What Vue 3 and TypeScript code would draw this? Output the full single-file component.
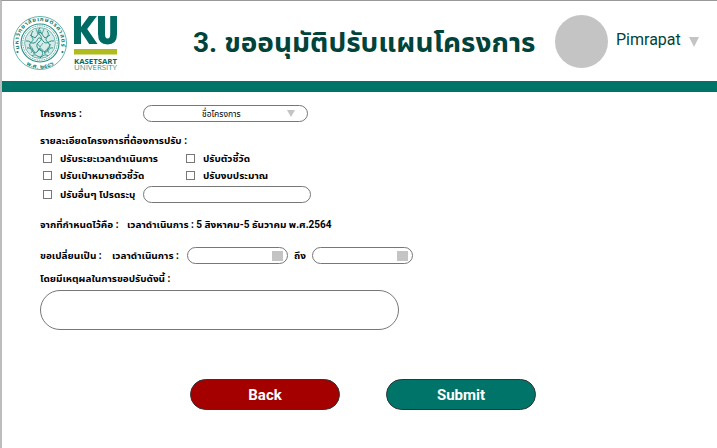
<script setup lang="ts">
import { ref } from 'vue'

interface Choice {
  label: string
  size: string
}

const choices = ref<Choice[]>([
  { label: 'ปรับระยะเวลาดำเนินการ', size: 'duration' },
  { label: 'ปรับตัวชี้วัด', size: 'kpi' },
  { label: 'ปรับเป้าหมายตัวชี้วัด', size: 'target' },
  { label: 'ปรับงบประมาณ', size: 'budget' },
])
</script>

<template>
  <div class="page">
    <header class="header">
      <svg class="seal" viewBox="0 0 56 56">
        <defs>
          <path id="seal-top" d="M7.5 34 A21.5 21.5 0 1 1 48.5 34" />
          <path id="seal-bottom" d="M9 45 A25.2 25.2 0 0 0 47 45" />
        </defs>
        <g fill="none" stroke="#2b8f86">
          <circle cx="28" cy="28" r="26.5" stroke-width=".7" />
          <circle cx="28" cy="28" r="19" stroke-width="1.1" />
          <circle cx="28" cy="28" r="17.2" stroke-width=".9" stroke-dasharray="1 .8" />
          <circle cx="28" cy="28" r="15.4" stroke-width=".6" fill="#d7ebe8" />
          <path stroke-width="1" d="M28 13c-3 3-2 5 0 7s2 5-1 7-3 6 1 8 3 5 0 8M21 16c-3 4-1 6 0 8s-5 4-3 8 5 2 4 7M35 16c3 3 0 6-1 8s6 5 3 9-5 1-4 6M14 26c4-1 4 3 8 2s3-6 6-5 3 5 6 5 4-3 8-2M15 33c5-1 5 5 8 5s3-5 5-5 3 5 6 4 3-5 7-4M18 20l5 3 5-6 5 6 5-3M20 41c4-3 5 1 8 1s4-4 8-1" />
          <path stroke-width=".7" d="M24 14l2 5 2-4 2 4 2-5M17 29l4 5-2 4M39 29l-4 5 2 4M25 28l3 4 3-4M25 37l3-3 3 3" />
        </g>
        <g fill="#167f76">
          <circle cx="5.5" cy="37" r="1.1" />
          <circle cx="50.5" cy="37" r="1.1" />
        </g>
        <text class="seal-text"><textPath href="#seal-top" textLength="78">มหาวิทยาลัยเกษตรศาสตร์</textPath></text>
        <text class="seal-text"><textPath href="#seal-bottom" startOffset="7" textLength="29">พ.ศ. ๒๔๘๖</textPath></text>
      </svg>
      <svg class="ku" viewBox="0 0 44 58">
        <path fill="#006b63" d="M0 2H7V13L15 2H23L13.2 15 23.5 30H15.2L7 17.5V30H0ZM24 2H31V20Q31 24.5 33.6 24.5T36.2 20V2H43V20Q43 30.5 33.5 30.5T24 20Z" />
        <path fill="#b2bb1e" d="M0 35h43v5.5H0z" />
        <text class="ku-bold" x="0" y="49.5" textLength="43" lengthAdjust="spacingAndGlyphs">KASETSART</text>
        <text class="ku-light" x="0" y="56.2" textLength="43" lengthAdjust="spacingAndGlyphs">UNIVERSITY</text>
      </svg>
      <h1 class="title">3. ขออนุมัติปรับแผนโครงการ</h1>
      <div class="avatar"></div>
      <span class="user">Pimrapat</span>
      <svg class="caret" viewBox="0 0 10 10"><path d="M0 0h10L5 10z" /></svg>
    </header>
    <div class="band"></div>
    <main class="form">
      <div class="row project">
        <span class="text project-label">โครงการ :</span>
        <div class="field select">
          <span class="placeholder">ชื่อโครงการ</span>
          <svg class="arrow" viewBox="0 0 8 7"><path d="M0 0h8L4 7z" /></svg>
        </div>
      </div>
      <div class="row heading"><span class="text">รายละเอียดโครงการที่ต้องการปรับ :</span></div>
      <div class="choices">
        <div v-for="choice in choices" :key="choice.label" class="choice">
          <i class="box"></i><span class="text" :class="choice.size">{{ choice.label }}</span>
        </div>
      </div>
      <div class="row other">
        <i class="box"></i>
        <span class="text other-label">ปรับอื่นๆ โปรดระบุ</span>
        <div class="field other-field"></div>
      </div>
      <div class="row original">
        <span class="text original-label">จากที่กำหนดไว้คือ :</span>
        <span class="text">เวลาดำเนินการ : 5 สิงหาคม-5 ธันวาคม พ.ศ.2564</span>
      </div>
      <div class="row change">
        <span class="text change-label">ขอเปลี่ยนเป็น :</span>
        <span class="text period-label">เวลาดำเนินการ :</span>
        <div class="field date"><i class="calendar"></i></div>
        <span class="text until">ถึง</span>
        <div class="field date"><i class="calendar"></i></div>
      </div>
      <div class="row reason"><span class="text">โดยมีเหตุผลในการขอปรับดังนี้ :</span></div>
      <div class="field textarea"></div>
      <div class="actions">
        <button class="button back">Back</button>
        <button class="button submit">Submit</button>
      </div>
    </main>
  </div>
</template>

<style>
body {
  background: #fff;
  overflow: hidden;
}
</style>

<style scoped>
* { box-sizing: border-box; }
.page {
  width: 717px;
  height: 448px;
  overflow: hidden;
  border-top: 1px solid #999;
  border-left: 2px solid #bdbdbd;
  font-family: Roboto, "Noto Sans Thai UI", "Noto Sans Thai", sans-serif;
  color: #000;
}
.header {
  height: 80px;
  display: flex;
  align-items: flex-start;
}
.seal { width: 56px; height: 56px; margin: 14px 0 0 10px; flex: none; }
.seal-text { font-size: 6px; font-weight: 700; fill: #167f76; }
.ku { width: 44px; height: 58px; margin: 13px 0 0 6px; flex: none; }
.ku-bold { font: 700 7.5px "Open Sans", sans-serif; fill: #006b63; }
.ku-light { font: 400 7px "Open Sans", sans-serif; fill: #3c8f88; }
.title {
  margin: 22px 0 0 75px;
  width: 362px;
  flex: none;
  font-size: 28px;
  line-height: 40px;
  font-weight: 700;
  color: #00433a;
  white-space: nowrap;
}
.avatar { width: 53px; height: 53px; margin-top: 14px; border-radius: 50%; background: #c4c4c4; flex: none; }
.user { margin: 29px 0 0 8px; width: 73px; font-size: 16px; line-height: 20px; color: #00433a; flex: none; }
.caret { width: 10px; height: 10px; margin-top: 36px; fill: #c4c4c4; }
.band { height: 11px; background: #007468; }
.form { padding: 13px 0 0 38px; }
.row { display: flex; align-items: center; }
.text { font-size: 10px; line-height: 16px; font-weight: 700; white-space: nowrap; flex: none; }
.field { border: 1px solid #777; border-radius: 20px; height: 17px; flex: none; }
.project { height: 17px; }
.project-label { width: 103px; }
.select { width: 165px; display: flex; align-items: center; padding-left: 58px; }
.placeholder { width: 85px; font-size: 8.5px; line-height: 14px; }
.arrow { width: 8px; height: 7px; fill: #c4c4c4; }
.heading { height: 16px; margin-top: 11px; }
.choices { display: grid; grid-template-columns: 143px 143px; grid-auto-rows: 17px; margin-top: 1px; }
.choice { display: flex; align-items: center; }
.box { width: 9px; height: 9px; border: 1px solid #777; margin: 0 8px 0 3px; flex: none; }
.other { height: 17px; margin-top: 2px; }
.other-label { width: 83px; }
.other-field { width: 168px; }
.original { height: 16px; margin-top: 14px; }
.original-label { width: 87px; }
.change { height: 17px; margin-top: 14px; }
.change-label { width: 72px; }
.period-label { width: 75px; }
.date { width: 101px; display: flex; align-items: center; justify-content: flex-end; padding-right: 4px; }
.calendar { width: 11px; height: 10px; background: #c4c4c4; }
.until { width: 24px; padding-left: 6px; }
.reason { height: 16px; margin-top: 7px; }
.textarea { width: 359px; height: 40px; margin-top: 3px; }
.actions { display: flex; gap: 46px; margin: 49px 0 0 150px; }
.button {
  width: 150px;
  height: 31px;
  padding: 0;
  border: 1px solid #333;
  border-radius: 16px;
  color: #fff;
  font: 700 15px Roboto, sans-serif;
}
.back { background: #a50000; }
.submit { background: #007468; }
</style>
